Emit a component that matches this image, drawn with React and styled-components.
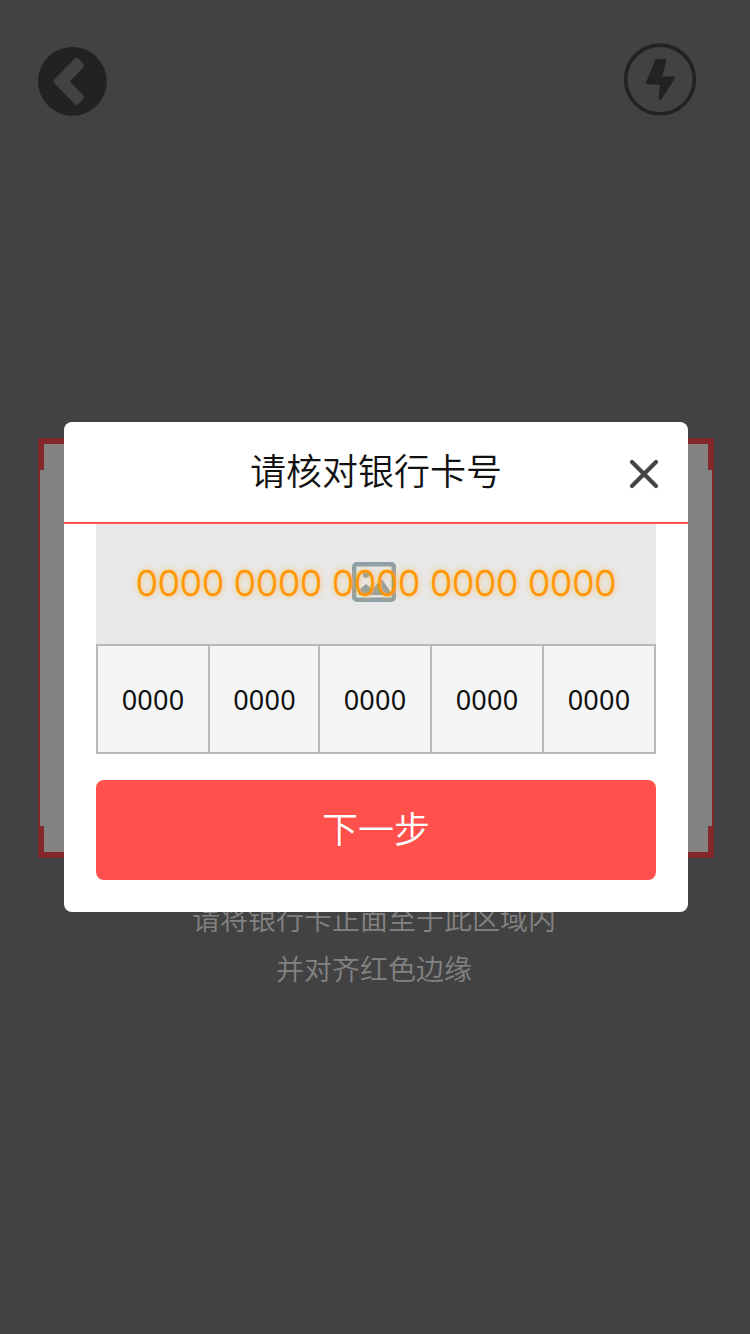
import React from 'react';
import styled, { createGlobalStyle } from 'styled-components';

const GlobalStyle = createGlobalStyle`
  * { box-sizing: border-box; }
  body { margin: 0; background: #424242; font-family: "Noto Sans CJK SC", sans-serif; font-weight: 350; }
  button { font: inherit; border: 0; padding: 0; background: none; cursor: pointer; }
`;

const Page = styled.main`
  position: relative;
  height: 1334px;
  overflow: hidden;
  background: #424242;
`;

const TopBar = styled.header`
  display: flex;
  justify-content: space-between;
  height: 438px;
  padding: 43px 54px 0 38px;
`;

const IconButton = styled.button`
  display: block;
  width: ${p => p.$size}px;
  height: ${p => p.$size}px;
  margin-top: ${p => p.$drop || 0}px;
  svg { display: block; overflow: visible; }
`;

const ScanFrame = styled.section`
  position: relative;
  width: 676px;
  height: 420px;
  margin-left: 38px;
  background: #828282;
  border: 2px solid #822828;
  border-top-width: 6px;
  border-bottom-width: 6px;
`;

const Corner = styled.i`
  position: absolute;
  width: 6px;
  height: 32px;
  background: #822828;
  ${p => p.$v}: -6px;
  ${p => p.$h}: -2px;
`;

const Hint = styled.p`
  margin: 35px 2px 0 0;
  text-align: center;
  color: #828282;
  font-size: 28px;
  line-height: 50px;
`;

const Overlay = styled.div`
  position: absolute;
  inset: 0;
  display: flex;
  align-items: center;
  justify-content: center;
  padding-left: 2px;
`;

const Dialog = styled.section`
  width: 624px;
  height: 490px;
  border-radius: 8px;
  background: #fff;
  color: #111;
`;

const DialogHeader = styled.header`
  display: grid;
  grid-template-columns: 64px 1fr 64px;
  align-items: center;
  height: 102px;
  padding: 0 12px;
  border-bottom: 2px solid #ff504c;
`;

const Title = styled.h1`
  grid-column: 2;
  margin: 0;
  padding-bottom: 6px;
  font-size: 36px;
  font-weight: 350;
  line-height: 94px;
  text-align: center;
`;

const CloseButton = styled.button`
  display: flex;
  justify-content: center;
  padding-top: 3px;
`;

const DialogBody = styled.div`
  padding: 0 32px;
`;

const CardPreview = styled.div`
  display: grid;
  place-items: center;
  height: 120px;
  background: #e8e8e8;
  > * { grid-area: 1 / 1; }
  svg { margin: -4px 4px 0 0; }
`;

const CardNumber = styled.span`
  z-index: 1;
  padding-bottom: 2px;
  color: #ff9600;
  font-family: Inter, sans-serif;
  font-weight: 300;
  font-size: 36px;
  letter-spacing: -0.2px;
  line-height: 118px;
  white-space: pre;
  -webkit-text-stroke: 0.4px #ff9600;
  text-shadow: 0 0 6px rgba(255, 175, 40, 0.8);
`;

const Cells = styled.div`
  display: grid;
  grid-template-columns: 112px 110px 112px 112px 114px;
  height: 110px;
  border: solid #b9b9b9;
  border-width: 2px 0;
`;

const Cell = styled.span`
  padding-top: 1px;
  border-left: 2px solid #b9b9b9;
  background: #f5f5f5;
  font-family: "Noto Sans", sans-serif;
  font-weight: 400;
  font-size: 27px;
  letter-spacing: 0.2px;
  line-height: 105px;
  text-align: center;
  &:nth-child(2) { padding-left: 1px; }
  &:last-child { border-right: 2px solid #b9b9b9; }
`;

const NextButton = styled.button`
  width: 100%;
  height: 100px;
  margin-top: 26px;
  border-radius: 8px;
  background: #ff504c;
  color: #fff;
  && { font-size: 36px; padding-bottom: 6px; }
`;

const groups = ['0000', '0000', '0000', '0000', '0000'];

export default function App() {
  return (
    <Page>
      <GlobalStyle />
      <TopBar>
        <IconButton $size={69} $drop={4} aria-label="返回">
          <svg width="69" height="69">
            <circle cx="34.4" cy="34.4" r="34.4" fill="#222" />
            <path d="M17.8 34.4 38.5 13.3 43.8 18.7 28.6 34.4 43.8 50.1 38.5 55.5Z" fill="#424242" stroke="#424242" strokeWidth="4.8" strokeLinejoin="round" />
          </svg>
        </IconButton>
        <IconButton $size={72} aria-label="闪光灯">
          <svg width="72" height="72">
            <circle cx="36" cy="36.4" r="34.3" fill="none" stroke="#222" strokeWidth="3.6" />
            <path d="M32.6 17.3 41 17.3 36.4 34.6 49.7 34.9 36 56 37.2 40.8 23.3 39.6Z" fill="#222" stroke="#222" strokeWidth="2.6" strokeLinejoin="round" />
          </svg>
        </IconButton>
      </TopBar>
      <ScanFrame>
        <Corner $v="top" $h="left" />
        <Corner $v="top" $h="right" />
        <Corner $v="bottom" $h="left" />
        <Corner $v="bottom" $h="right" />
      </ScanFrame>
      <Hint>请将银行卡正面至于此区域内<br />并对齐红色边缘</Hint>
      <Overlay>
        <Dialog>
          <DialogHeader>
            <Title>请核对银行卡号</Title>
            <CloseButton aria-label="关闭">
              <svg width="30" height="30">
                <path d="M3 3 27 27M27 3 3 27" stroke="#444" strokeWidth="4.2" strokeLinecap="round" />
              </svg>
            </CloseButton>
          </DialogHeader>
          <DialogBody>
            <CardPreview>
              <svg width="44" height="40">
                <rect x="2.2" y="2.2" width="39.6" height="35.6" rx="2.5" fill="none" stroke="#8fa0a8" strokeWidth="4.4" />
                <circle cx="14" cy="12.5" r="3.2" fill="#8fa0a8" />
                <path d="M7 33V28L14 22 20 27 30 17 38 29V33Z" fill="#8fa0a8" />
              </svg>
              <CardNumber>{groups.join(' ')}</CardNumber>
            </CardPreview>
            <Cells>{groups.map((g, i) => <Cell key={i}>{g}</Cell>)}</Cells>
            <NextButton>下一步</NextButton>
          </DialogBody>
        </Dialog>
      </Overlay>
    </Page>
  );
}
